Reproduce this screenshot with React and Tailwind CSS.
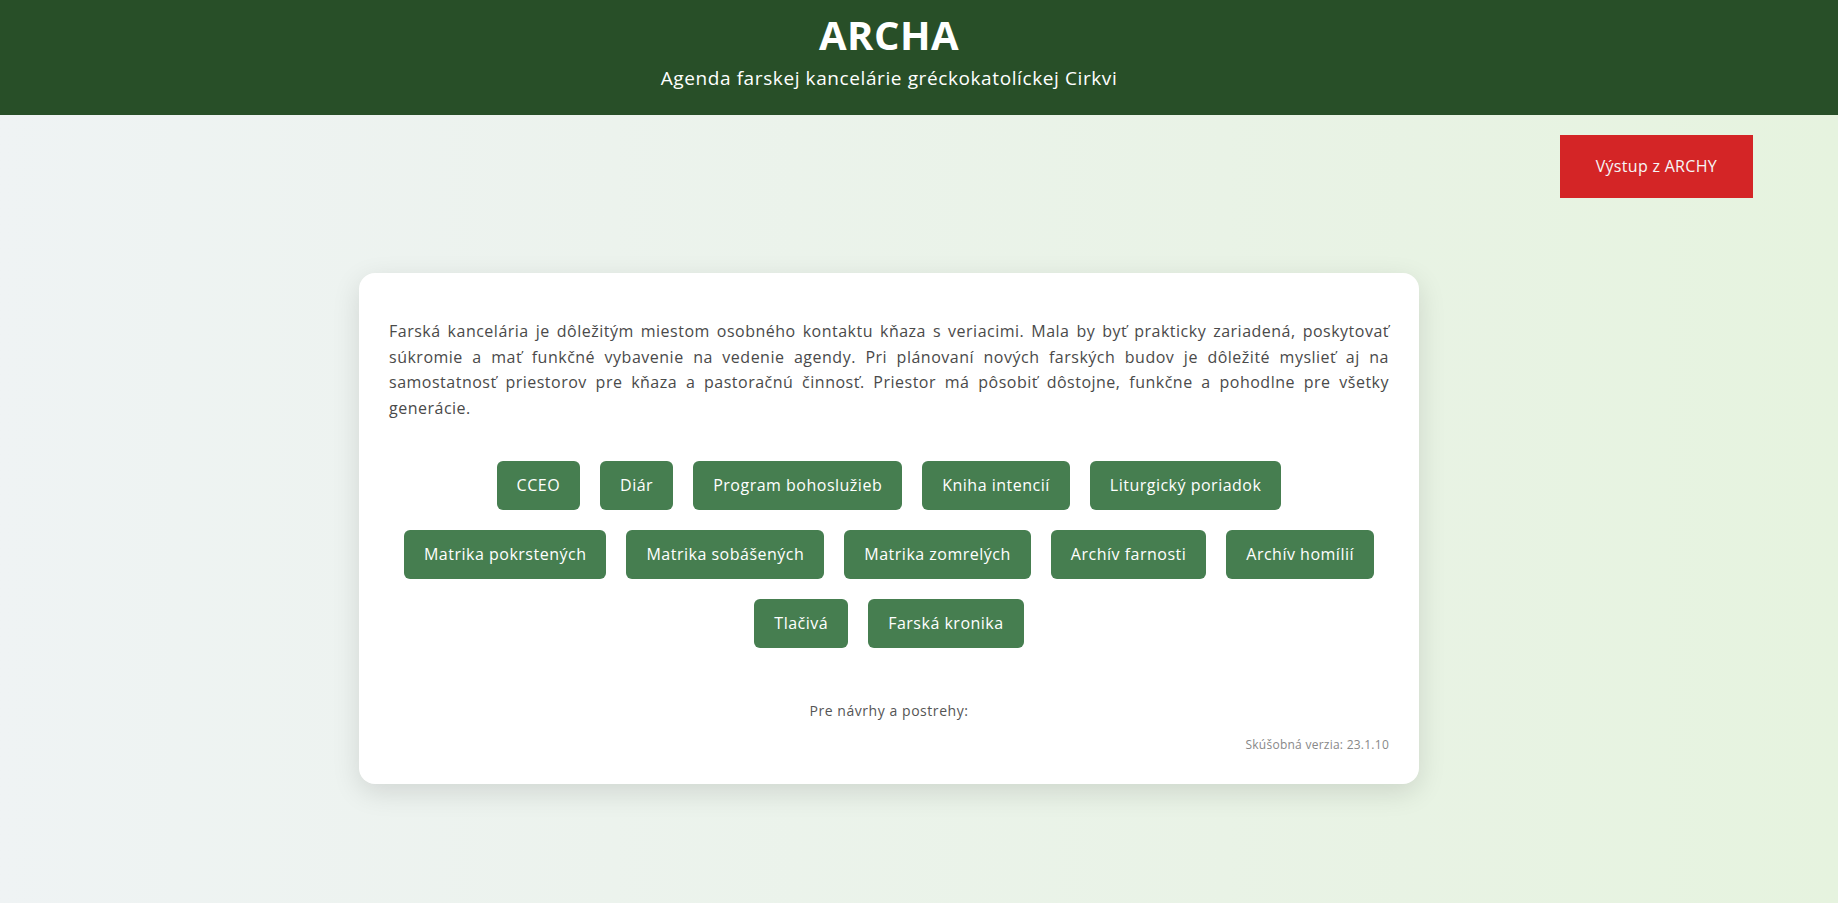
import React from "react";

const sections = [
  "CCEO",
  "Diár",
  "Program bohoslužieb",
  "Kniha intencií",
  "Liturgický poriadok",
  "Matrika pokrstených",
  "Matrika sobášených",
  "Matrika zomrelých",
  "Archív farnosti",
  "Archív homílií",
  "Tlačivá",
  "Farská kronika",
];

export default function App() {
  return (
    <div
      className="min-h-screen bg-linear-to-r from-[#eff3f4] to-[#e6f3df] text-[#444]"
      style={{ fontFamily: '"Open Sans", "Noto Sans", sans-serif' }}
    >
      <header className="bg-[#284f28] pr-[60px] pt-[11px] pb-[22px] text-center text-white">
        <h1 className="text-[40px] font-bold leading-[48px] tracking-[0.5px]">ARCHA</h1>
        <p className="mt-[4px] text-[19px] leading-[30px] tracking-[0.6px]">
          Agenda farskej kancelárie gréckokatolíckej Cirkvi
        </p>
      </header>

      <main className="pr-[60px] pb-10">
        <div className="flex justify-end pr-[25px] pt-[20px]">
          <button className="bg-[#d42526] px-9 py-5 text-[16px] leading-[23px] tracking-[0.3px] text-[#f6f6f6]">
            Výstup z ARCHY
          </button>
        </div>

        <section className="mx-auto mt-[75px] w-[1060px] rounded-[16px] bg-white p-[30px] shadow-[0_8px_28px_rgba(0,0,0,0.12)]">
          <p className="mt-4 text-justify text-[16px] leading-[25.6px] tracking-[0.5px] text-[#4a4a4a]">
            Farská kancelária je dôležitým miestom osobného kontaktu kňaza s
            veriacimi. Mala by byť prakticky zariadená, poskytovať súkromie a
            mať funkčné vybavenie na vedenie agendy. Pri plánovaní nových
            farských budov je dôležité myslieť aj na samostatnosť priestorov pre
            kňaza a pastoračnú činnosť. Priestor má pôsobiť dôstojne, funkčne a
            pohodlne pre všetky generácie.
          </p>

          <div className="mt-[30px] flex flex-wrap justify-center">
            {sections.map((label) => (
              <button
                key={label}
                className="m-[10px] rounded-[6px] bg-[#467e50] px-5 py-3 text-[16px] leading-[25px] tracking-[0.5px] text-white"
              >
                {label}
              </button>
            ))}
          </div>

          <p className="mt-[42px] text-center text-[14px] leading-[22px] tracking-[0.55px] text-[#555]">
            Pre návrhy a postrehy:
          </p>
          <p className="mt-[13px] text-right text-[12px] leading-[19px] tracking-[0.25px] text-[#888]">
            Skúšobná verzia: 23.1.10
          </p>
        </section>
      </main>
    </div>
  );
}
